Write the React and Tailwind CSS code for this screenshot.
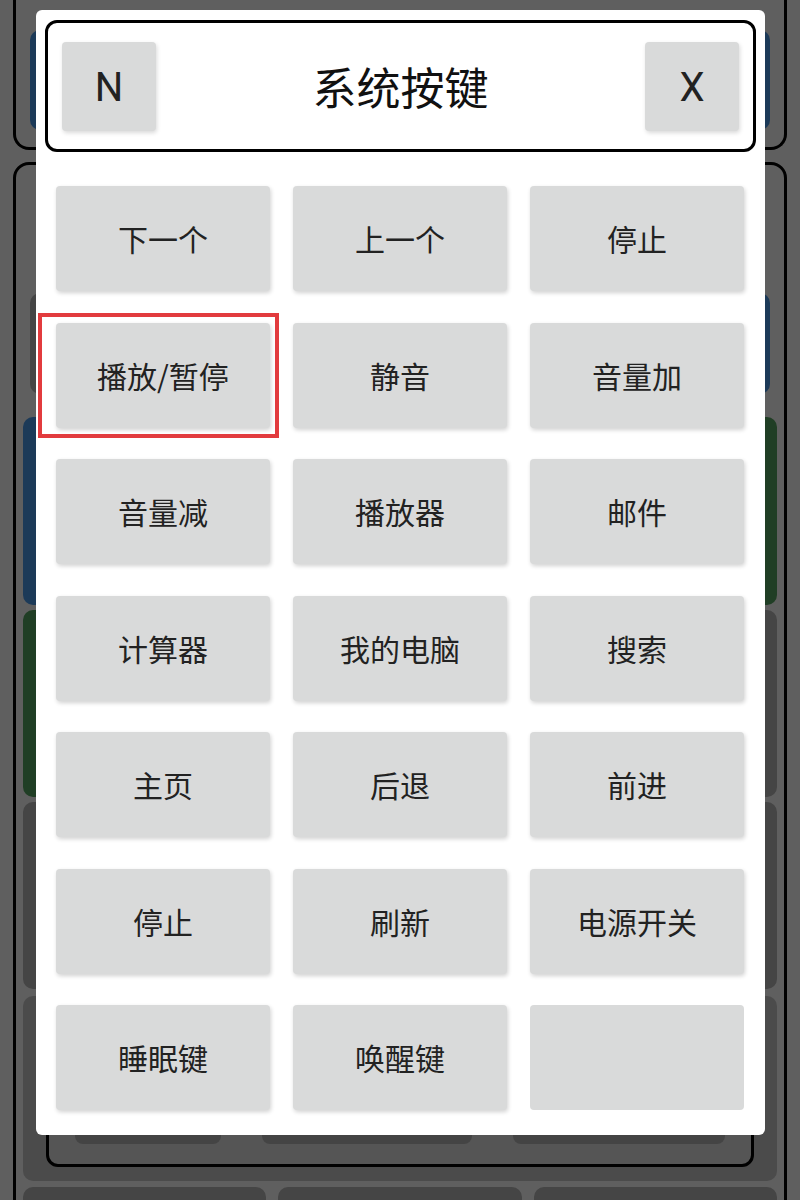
import React from "react";

const FONT = "font-['Noto_Sans_CJK_SC','Noto_Sans',sans-serif]";

const KEYS = [
  "下一个", "上一个", "停止",
  "播放/暂停", "静音", "音量加",
  "音量减", "播放器", "邮件",
  "计算器", "我的电脑", "搜索",
  "主页", "后退", "前进",
  "停止", "刷新", "电源开关",
  "睡眠键", "唤醒键", "",
];

// page that sits behind the dialog
const Backdrop = () => (
  <div className="h-[1200px] w-[800px] overflow-hidden bg-[#eeeeee] px-[13px]">
    <div className="flex h-[150px] justify-between rounded-b-[16px] border-x-[3px] border-b-[3px] border-black px-[14px] pt-[30px]">
      <div className="h-[100px] w-[214px] rounded-[10px] bg-[#4891dc]" />
      <div className="h-[100px] w-[214px] rounded-[10px] bg-[#4891dc]" />
    </div>

    <div className="mt-[12px] h-[1100px] rounded-[16px] border-[3px] border-black px-[7px] pt-[128px]">
      <div className="flex justify-between px-[7px]">
        <div className="h-[101px] w-[230px] rounded-[10px] bg-[#acacac]" />
        <div className="h-[101px] w-[230px] rounded-[10px] bg-[#acacac]" />
        <div className="h-[101px] w-[230px] rounded-[10px] bg-[#4891dc]" />
      </div>

      <div className="mt-[23px] grid grid-cols-3 gap-x-[12px] gap-y-[5px]">
        <div className="h-[188px] rounded-[10px] bg-[#4891dc]" />
        <div className="h-[188px] rounded-[10px] bg-[#acacac]" />
        <div className="h-[188px] rounded-[10px] bg-[#529b5c]" />
        <div className="h-[187px] rounded-[10px] bg-[#529b5c]" />
        <div className="h-[187px] rounded-[10px] bg-[#acacac]" />
        <div className="h-[187px] rounded-[10px] bg-[#acacac]" />
        <div className="h-[187px] rounded-[10px] bg-[#acacac]" />
        <div className="h-[187px] rounded-[10px] bg-[#acacac]" />
        <div className="h-[187px] rounded-[10px] bg-[#acacac]" />
      </div>

      <div className="mt-[7px] h-[185px] rounded-[10px] bg-[#bcbcbc] px-[23px] pt-[10px]">
        <div className="flex h-[161px] items-end justify-between rounded-[12px] border-[3px] border-black bg-[#d4d4d4] px-[26px] pb-[20px]">
          <div className="h-[110px] w-[146px] rounded-[8px] bg-[#aaaaaa]" />
          <div className="h-[110px] w-[210px] rounded-[8px] bg-[#aaaaaa]" />
          <div className="h-[110px] w-[212px] rounded-[8px] bg-[#aaaaaa]" />
        </div>
      </div>

      <div className="mt-[6px] grid grid-cols-3 gap-x-[12px]">
        <div className="h-[100px] rounded-[10px] bg-[#acacac]" />
        <div className="h-[100px] rounded-[10px] bg-[#acacac]" />
        <div className="h-[100px] rounded-[10px] bg-[#acacac]" />
      </div>
    </div>
  </div>
);

const KeyButton = ({ label, flat }) => (
  <button
    className={`flex h-[105px] w-full items-center justify-center rounded-[4px] bg-[#d9dada] text-[30px] text-[#222] ${FONT} ${
      flat ? "" : "shadow-[1px_2px_4px_rgba(0,0,0,0.18)]"
    }`}
  >
    {label}
  </button>
);

export default function App() {
  return (
    <div className="relative h-[1200px] w-[800px] overflow-hidden">
      <Backdrop />
      <div className="absolute inset-0 bg-black/60" />

      <div className="absolute left-[36px] top-[10px] h-[1125px] w-[729px] rounded-[6px] bg-white px-[9px] pt-[10px]">
        <div className="flex h-[132px] items-center justify-between rounded-[12px] border-[3px] border-black px-[14px]">
          <button className="flex h-[89px] w-[94px] items-center justify-center rounded-[4px] bg-[#d9dada] pt-[3px] font-['Roboto',sans-serif] text-[40px] text-[#222] shadow-[1px_2px_4px_rgba(0,0,0,0.15)]">
            N
          </button>
          <h1 className={`text-[44px] text-[#111] ${FONT}`}>系统按键</h1>
          <button className="flex h-[89px] w-[94px] items-center justify-center rounded-[4px] bg-[#d9dada] pt-[3px] font-['Roboto',sans-serif] text-[40px] text-[#222] shadow-[1px_2px_4px_rgba(0,0,0,0.15)]">
            X
          </button>
        </div>

        <div className="mt-[34px] grid grid-cols-3 gap-x-[23px] gap-y-[31.5px] pl-[11px] pr-[12px]">
          {KEYS.map((label, i) => (
            <div key={i} className="relative">
              <KeyButton label={label} flat={!label} />
              {i === 3 && (
                <span className="pointer-events-none absolute -bottom-[10px] -left-[18px] -right-[9px] -top-[10px] border-[4px] border-[#e23b3e]" />
              )}
            </div>
          ))}
        </div>
      </div>
    </div>
  );
}
